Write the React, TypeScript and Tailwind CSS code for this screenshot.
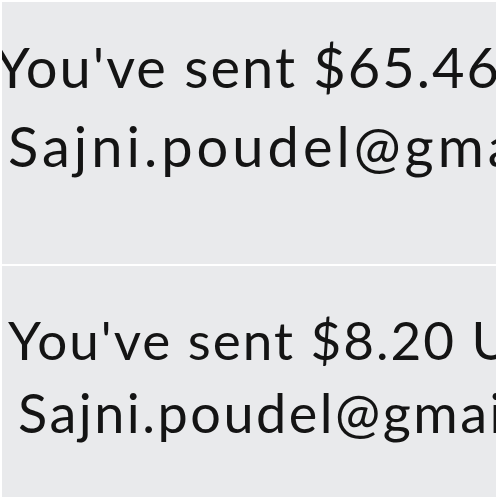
import React from 'react';

interface Transfer {
  amount: string;
  email: string;
}

const transfers: Transfer[] = [
  { amount: '$65.46 USD', email: 'Sajni.poudel@gmail.com' },
  { amount: '$8.20 USD', email: 'Sajni.poudel@gmail.com' },
];

const App: React.FC = () => {
  return (
    <div className="w-[500px] h-[500px] bg-white pt-[2px] pl-[2px] pr-[4px] pb-[3px] flex flex-col gap-[2px] font-['Lato',sans-serif] text-[#141414]">
      <div className="h-[262px] bg-[#e9eaec] overflow-hidden pt-[25px]">
        <p className="text-[56px] leading-[79px] tracking-[2px] whitespace-nowrap -ml-[7px]">You've sent {transfers[0].amount}</p>
        <p className="text-[56px] leading-[79px] tracking-[4px] whitespace-nowrap ml-[6px]">{transfers[0].email}</p>
      </div>
      <div className="flex-1 bg-[#e9eaec] overflow-hidden pt-[37px]">
        <p className="text-[53px] leading-[73px] tracking-[2px] whitespace-nowrap ml-[6px]">You've sent {transfers[1].amount}</p>
        <p className="text-[54px] leading-[73px] tracking-[2.5px] whitespace-nowrap ml-[16px]">{transfers[1].email}</p>
      </div>
    </div>
  );
};

export default App;
